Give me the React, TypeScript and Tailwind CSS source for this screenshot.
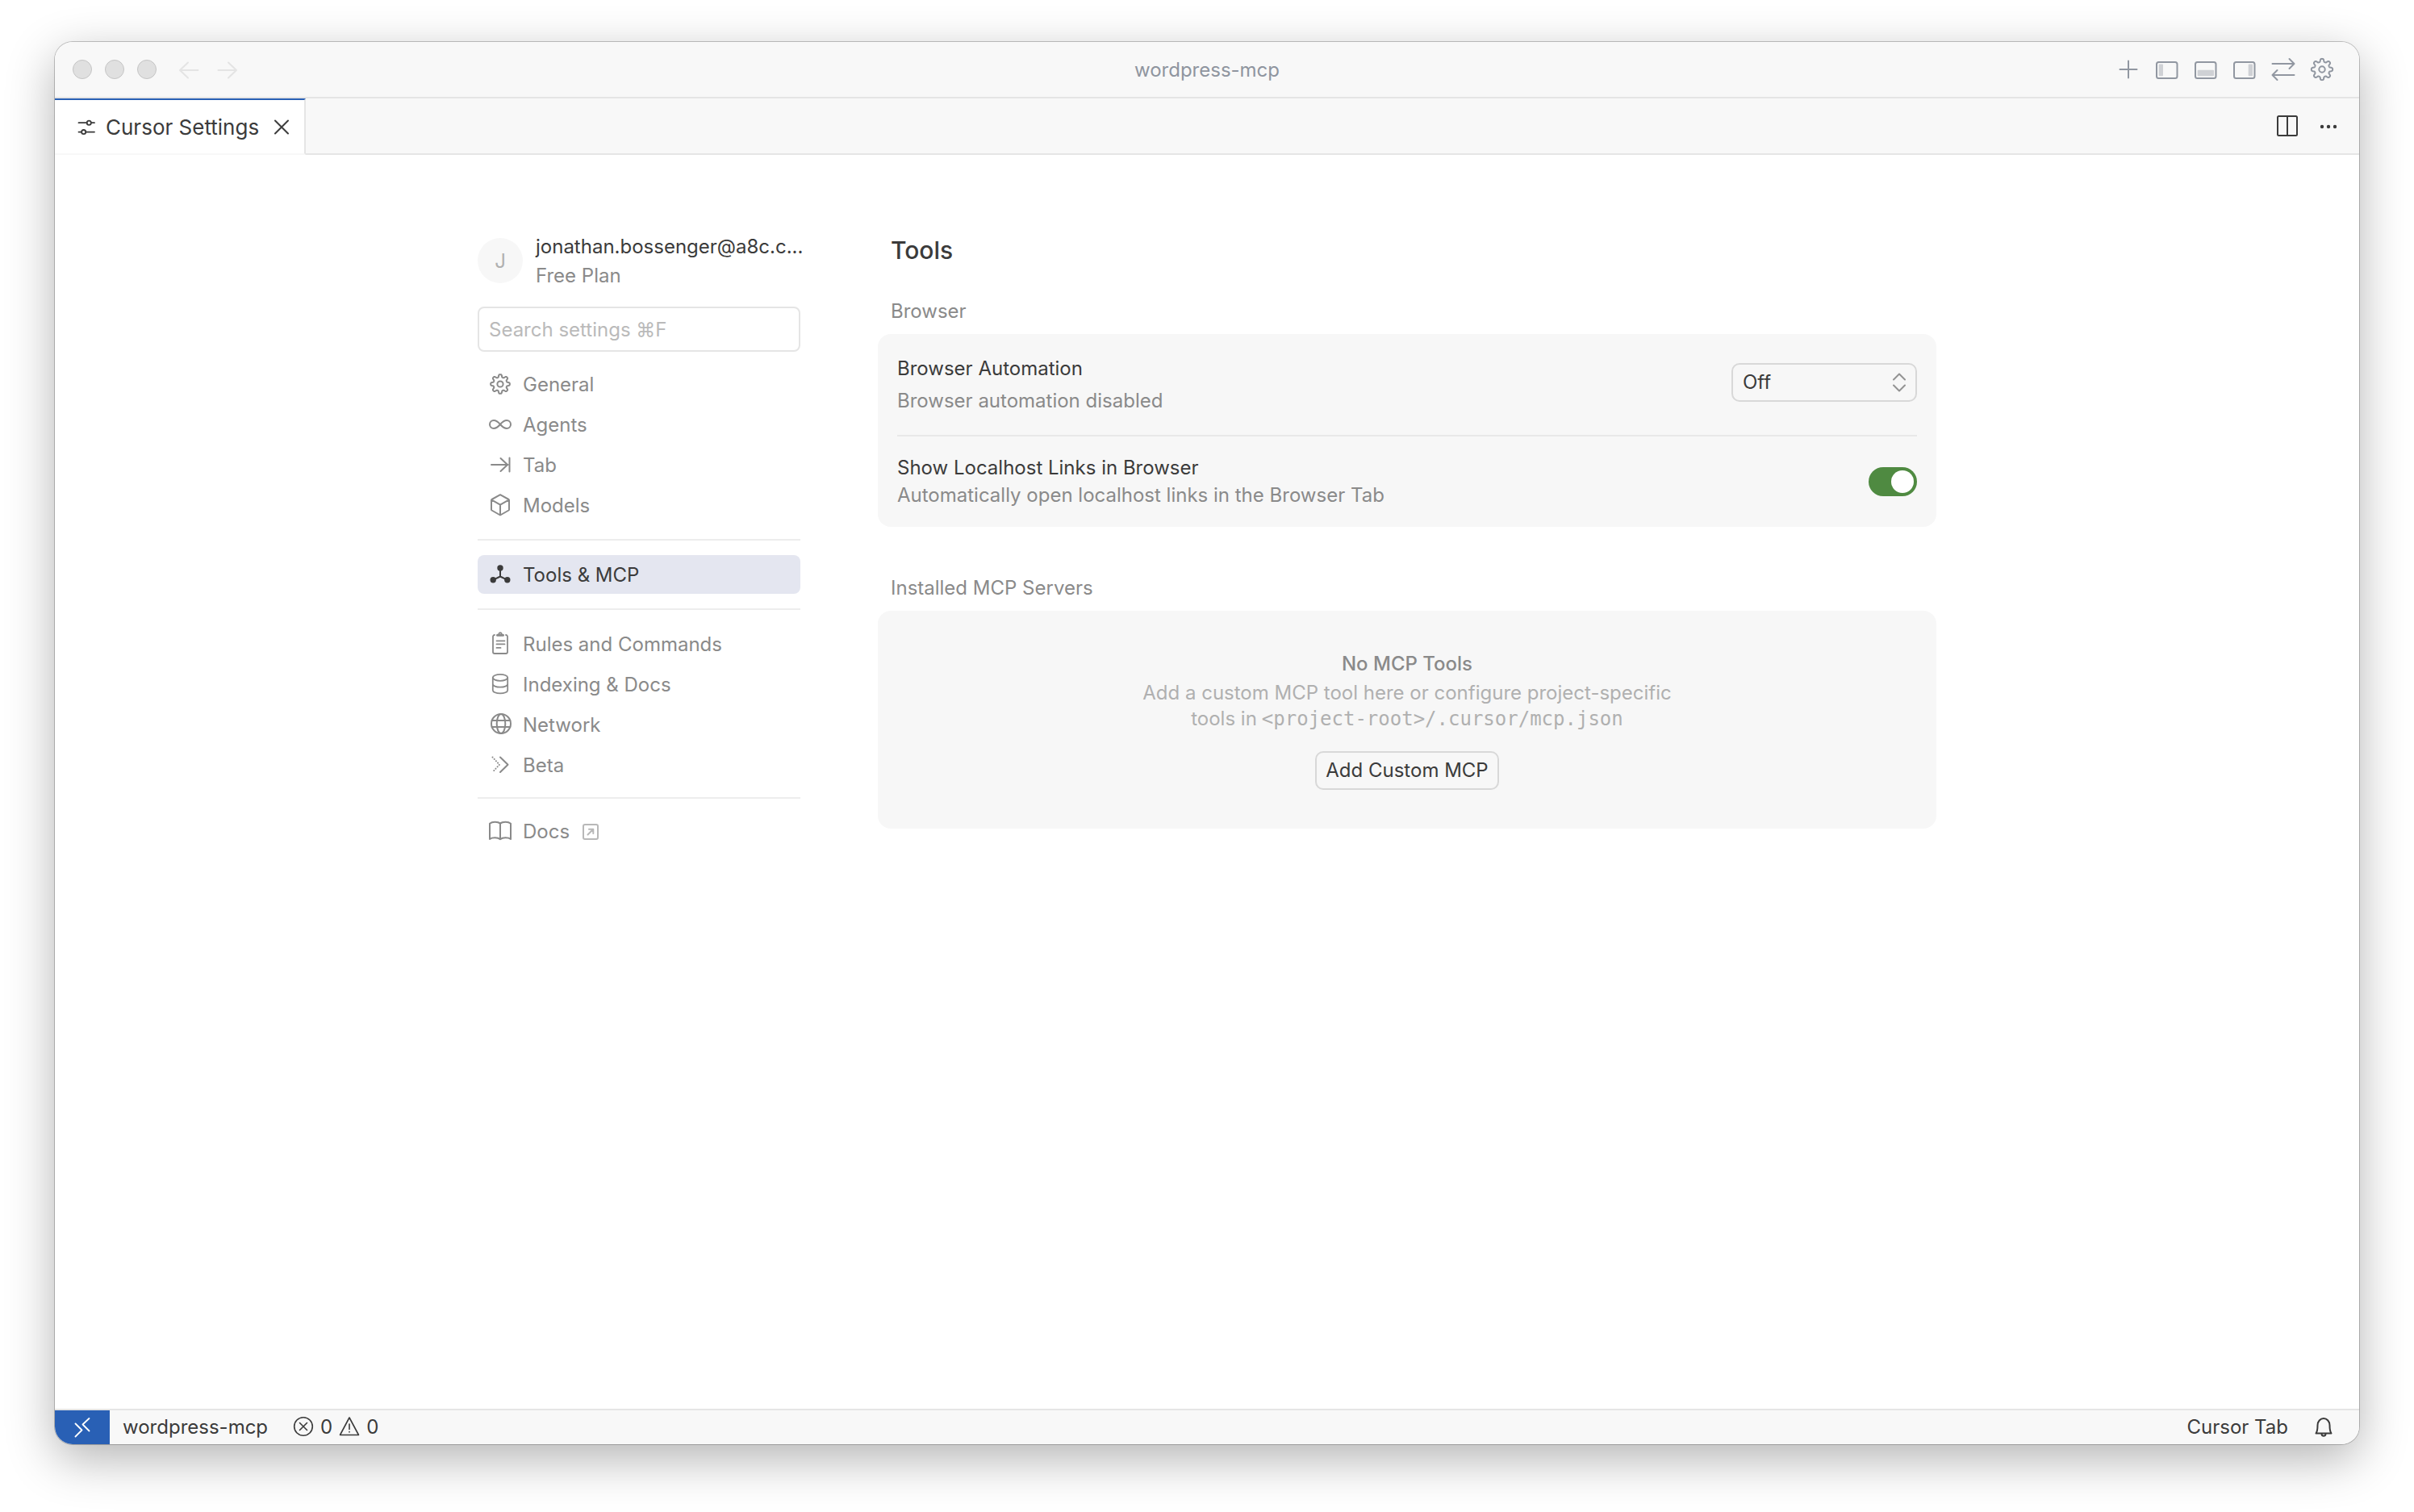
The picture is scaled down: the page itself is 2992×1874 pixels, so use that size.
import { useState } from "react";
import type { ReactNode } from "react";
import clsx from "clsx";

interface IconProps {
  children: ReactNode;
  className?: string;
  width?: number;
}

// shared wrapper, every icon is drawn on a 32 grid
const Icon = ({ children, className, width = 2 }: IconProps) => (
  <svg
    viewBox="0 0 32 32"
    fill="none"
    stroke="currentColor"
    strokeWidth={width}
    strokeLinecap="round"
    strokeLinejoin="round"
    aria-hidden="true"
    className={clsx("size-8 shrink-0", className)}
  >
    {children}
  </svg>
);

// eight rounded teeth around a circle
const gearPath = (radius: number, tooth: number) => {
  const points: string[] = [];
  for (let i = 0; i < 160; i++) {
    const t = (i / 160) * Math.PI * 2;
    const r = radius + tooth * Math.tanh(2 * Math.cos(8 * t));
    points.push(`${(16 + r * Math.sin(t)).toFixed(2)} ${(16 - r * Math.cos(t)).toFixed(2)}`);
  }
  return "M" + points.join("L") + "Z";
};

const GearLarge = () => (
  <Icon>
    <path d={gearPath(11.3, 1.9)} />
    <circle cx="16" cy="16" r="3.7" />
  </Icon>
);

const GearIcon = () => (
  <Icon>
    <path d={gearPath(10.2, 1.7)} />
    <circle cx="16" cy="16" r="3.6" />
  </Icon>
);

const AgentsIcon = () => (
  <Icon>
    <path d="M16 16c-3-3.5-5-5-8-5a5 5 0 0 0 0 10c3 0 5-1.5 8-5s5-5 8-5a5 5 0 0 1 0 10c-3 0-5-1.5-8-5" />
  </Icon>
);

const TabIcon = () => (
  <Icon>
    <path d="M5 16h20.5M16.5 8l8.500 8-8.500 8M27.500 7.500v17" />
  </Icon>
);

const ModelsIcon = () => (
  <Icon>
    <path d="M16 3.2 26.5 9a1.2 1.2 0 0 1 .5 1v11.5a1.2 1.2 0 0 1-.5 1L16 28.5 5.5 22.5a1.2 1.2 0 0 1-.5-1V10a1.2 1.2 0 0 1 .5-1zM5.5 9.700 16 15.700l10.500-6M16 15.700v12" />
  </Icon>
);

const ToolsIcon = () => (
  <Icon>
    <path d="M16 9v9.5M16 18.5 7.500 22.700M16 18.500l8.500 4.200" />
    <g fill="currentColor" stroke="none">
      <circle cx="16" cy="8" r="3.7" />
      <circle cx="7.2" cy="22.7" r="3.7" />
      <circle cx="24.8" cy="22.7" r="3.7" />
    </g>
  </Icon>
);

const RulesIcon = () => (
  <Icon width={1.8}>
    <path d="M9 5a2 2 0 0 0-2 2v19a2 2 0 0 0 2 2h14a2 2 0 0 0 2-2V7a2 2 0 0 0-2-2" />
    <path d="M11.5 12.3h10M11.5 16.4h10M11.5 20.9h5" />
    <path d="M12.5 5.3h7" strokeWidth="3" />
    <circle cx="16" cy="3.8" r="1.6" />
  </Icon>
);

const IndexingIcon = () => (
  <Icon width={1.8}>
    <ellipse cx="16" cy="7.8" rx="9.2" ry="4" />
    <path d="M6.8 7.8V23.5c0 2.2 4 3.9 9.2 3.9s9.2-1.7 9.2-3.900V7.800M6.800 15.800c0 2.200 4 3.900 9.200 3.900s9.200-1.700 9.200-3.900" />
  </Icon>
);

const NetworkIcon = () => (
  <Icon>
    <circle cx="17" cy="15" r="12" />
    <ellipse cx="17" cy="15" rx="5.3" ry="12" />
    <path d="M5.7 11h22.6M5.7 19h22.6" />
  </Icon>
);

const BetaIcon = () => (
  <Icon>
    <path d="M16 6.5 25.5 15.7 16 25" />
    <path d="M6.5 6.5 15 15.7 6.5 25" strokeDasharray="0.1 3.1" />
  </Icon>
);

const BookIcon = () => (
  <Icon>
    <path d="M16 6.8C14.5 5.3 12 4.8 9.5 4.8S4.600 5.400 3 6.800V26c1.600-1.300 4-1.700 6.500-1.700s5 .6 6.500 2c1.500-1.400 4-2 6.500-2s4.900.4 6.500 1.700V6.800c-1.600-1.400-4-2-6.500-2S17.500 5.300 16 6.800zM16 6.800v19.500" />
  </Icon>
);

const ExternalIcon = () => (
  <Icon className="text-[#b8b8b8]">
    <rect x="7" y="7" width="18" height="18" rx="2" />
    <path d="M12.5 19.5 19 13M14 12.7h5.3V18" />
  </Icon>
);

interface PanelIconProps {
  side: "left" | "bottom" | "right";
}

const PanelIcon = ({ side }: PanelIconProps) => (
  <Icon>
    <rect x="3" y="7" width="25.5" height="20" rx="2.5" />
    <g fill="currentColor" stroke="none" opacity="0.4">
      {side === "left" && <rect x="5.7" y="9.5" width="5.3" height="14.7" rx="1" />}
      {side === "bottom" && <rect x="5.7" y="16.8" width="20.3" height="7.4" rx="1" />}
      {side === "right" && <rect x="20.7" y="9.5" width="5.3" height="14.7" rx="1" />}
    </g>
  </Icon>
);

const TitleBar = () => (
  <header className="grid h-[70px] grid-cols-[1fr_auto_1fr] items-center border-b-2 border-[#e5e5e5] bg-[#f8f8f8] px-[22px]">
    <div className="flex items-center gap-6">
      <div className="flex gap-4">
        <button aria-label="Close" className="size-6 rounded-full border border-[#c4c4c4] bg-[#e0e0e0]" />
        <button aria-label="Minimize" className="size-6 rounded-full border border-[#c4c4c4] bg-[#e0e0e0]" />
        <button aria-label="Zoom" className="size-6 rounded-full border border-[#c4c4c4] bg-[#e0e0e0]" />
      </div>
      <div className="flex gap-4 text-[#e4e4e4]">
        <button aria-label="Back">
          <Icon>
            <path d="M15 7.5 5 17l10 9.5M5 17h22.5" />
          </Icon>
        </button>
        <button aria-label="Forward">
          <Icon>
            <path d="M17 7.5 27 17l-10 9.5M27 17H4.5" />
          </Icon>
        </button>
      </div>
    </div>
    <h1 className="pt-0.5 leading-8 text-[#8f959f]">wordpress-mcp</h1>
    <div className="flex justify-end gap-4 pr-2 text-[#9197a1]">
      <button aria-label="New chat">
        <Icon>
          <path d="M16 5.5v21M5.5 16h21" />
        </Icon>
      </button>
      <button aria-label="Toggle side bar">
        <PanelIcon side="left" />
      </button>
      <button aria-label="Toggle panel">
        <PanelIcon side="bottom" />
      </button>
      <button aria-label="Toggle chat">
        <PanelIcon side="right" />
      </button>
      <button aria-label="Switch layout">
        <Icon>
          <path d="M2.5 9h27M23.5 3l6 6-6 6M29.5 23h-27M8.5 17l-6 6 6 6" />
        </Icon>
      </button>
      <button aria-label="Settings">
        <GearLarge />
      </button>
    </div>
  </header>
);

const TabBar = () => (
  <div className="flex h-[70px] bg-[#f8f8f8] text-[#3b3b3b]">
    <div className="flex items-center border-t-2 border-r-2 border-b-2 border-t-[#2960b5] border-r-[#e5e5e5] border-b-[#f8f8f8] bg-white pr-3 pl-[23px]">
      <Icon width={1.8}>
        <path d="M6.5 11.2h10M22 11.2h4M6.5 22.6h3.5M15.5 22.6h10.5" />
        <circle cx="19.3" cy="11.2" r="2.6" />
        <circle cx="12.7" cy="22.6" r="2.6" />
      </Icon>
      <span className="mt-0.5 ml-2 text-[26px] leading-8">Cursor Settings</span>
      <button aria-label="Close tab" className="ml-3">
        <Icon>
          <path d="m8 8.5 16 16M24 8.5l-16 16" />
        </Icon>
      </button>
    </div>
    <div className="flex flex-1 items-center justify-end gap-5 border-b-2 border-[#e5e5e5] pr-[22px]">
      <button aria-label="Split editor">
        <Icon>
          <rect x="5" y="4" width="24" height="24" rx="1.5" />
          <path d="M17 4v24" />
        </Icon>
      </button>
      <button aria-label="More actions">
        <Icon>
          <g fill="currentColor" stroke="none">
            <circle cx="8" cy="17" r="2.2" />
            <circle cx="16" cy="17" r="2.2" />
            <circle cx="24" cy="17" r="2.2" />
          </g>
        </Icon>
      </button>
    </div>
  </div>
);

interface NavItemProps {
  label: string;
  icon: ReactNode;
  active?: boolean;
  external?: boolean;
}

const NavItem = ({ label, icon, active, external }: NavItemProps) => (
  <a
    href="#"
    className={clsx(
      "flex h-12 items-center gap-3 rounded-lg px-3",
      active ? "bg-[#e4e6f0] text-[#3b3b3b]" : "text-[#8a8a8a]"
    )}
  >
    {icon}
    <span className="flex items-center gap-2.5 pt-0.5">
      {label}
      {external && <ExternalIcon />}
    </span>
  </a>
);

const Sidebar = () => (
  <aside className="w-[400px] shrink-0">
    <div className="flex items-center gap-4">
      <div className="flex size-14 shrink-0 items-center justify-center rounded-full bg-[#f7f7f7] pt-0.5 text-[#b0b0b0]">
        J
      </div>
      <div className="pt-0.5 leading-9 whitespace-nowrap">
        <p className="text-[#3b3b3b]">jonathan.bossenger@a8c.c...</p>
        <p className="text-[#8a8a8a]">Free Plan</p>
      </div>
    </div>
    <input
      type="text"
      aria-label="Search settings"
      placeholder="Search settings ⌘F"
      className="mt-5 h-14 w-full rounded-lg border-2 border-[#e5e5e5] bg-white px-3 text-[#3b3b3b] outline-none placeholder:text-[#bababa]"
    />
    <nav className="mt-4">
      <div className="flex flex-col gap-0.5">
        <NavItem label="General" icon={<GearIcon />} />
        <NavItem label="Agents" icon={<AgentsIcon />} />
        <NavItem label="Tab" icon={<TabIcon />} />
        <NavItem label="Models" icon={<ModelsIcon />} />
      </div>
      <hr className="my-[18px] border-t-2 border-[#ededed]" />
      <NavItem label="Tools & MCP" icon={<ToolsIcon />} active />
      <hr className="my-[18px] border-t-2 border-[#ededed]" />
      <div className="flex flex-col gap-0.5">
        <NavItem label="Rules and Commands" icon={<RulesIcon />} />
        <NavItem label="Indexing & Docs" icon={<IndexingIcon />} />
        <NavItem label="Network" icon={<NetworkIcon />} />
        <NavItem label="Beta" icon={<BetaIcon />} />
      </div>
      <hr className="my-4 border-t-2 border-[#ededed]" />
      <NavItem label="Docs" icon={<BookIcon />} external />
    </nav>
  </aside>
);

const ToolsPage = () => {
  const [automation, setAutomation] = useState("Off");
  const [localhost, setLocalhost] = useState(true);

  return (
    <main className="min-w-0 flex-1 pt-1 leading-8">
      <h2 className="pl-4 text-[30px] leading-10 font-medium text-[#3b3b3b]">Tools</h2>

      <h3 className="mt-10 pl-4 text-[#8a8a8a]">Browser</h3>
      <section className="mt-3 rounded-2xl bg-[#f7f7f7] px-6">
        <div className="flex items-start justify-between border-b-2 border-[#e8e8e8] pt-[26px] pb-[25px]">
          <div className="flex flex-col gap-1.5 leading-[34px]">
            <label htmlFor="automation" className="text-[#3b3b3b]">
              Browser Automation
            </label>
            <p className="text-[#8a8a8a]">Browser automation disabled</p>
          </div>
          <div className="relative mt-2.5">
            <select
              id="automation"
              value={automation}
              onChange={(e) => setAutomation(e.target.value)}
              className="block h-12 w-[230px] appearance-none rounded-[10px] border-2 border-[#d8d8d8] bg-transparent px-3 text-[#3b3b3b]"
            >
              <option>Off</option>
              <option>Browser Tab</option>
              <option>Google Chrome</option>
            </select>
            <Icon className="pointer-events-none absolute top-2 right-1.5 text-[#929292]">
              <path d="M9 12.5 16 5.500l7 7M9 19.500l7 7 7-7" />
            </Icon>
          </div>
        </div>
        <div className="flex items-center justify-between py-[22px]">
          <div className="leading-[34px]">
            <label htmlFor="localhost" className="text-[#3b3b3b]">
              Show Localhost Links in Browser
            </label>
            <p className="text-[#8a8a8a]">Automatically open localhost links in the Browser Tab</p>
          </div>
          <input
            id="localhost"
            type="checkbox"
            role="switch"
            checked={localhost}
            onChange={(e) => setLocalhost(e.target.checked)}
            className="flex h-9 w-[60px] appearance-none items-center rounded-full bg-[#c8c8c8] p-1 before:block before:size-7 before:rounded-full before:bg-white before:content-[''] checked:justify-end checked:bg-[#4f8a41]"
          />
        </div>
      </section>

      <h3 className="mt-[60px] pl-4 text-[#8a8a8a]">Installed MCP Servers</h3>
      <section className="mt-3 flex flex-col items-center rounded-2xl bg-[#f7f7f7] pt-[50px] pb-12 text-center">
        <h4 className="font-medium text-[#8a8a8a]">No MCP Tools</h4>
        <p className="mt-1 text-[#b0b0b0]">
          <span className="block">Add a custom MCP tool here or configure project-specific</span>
          <span className="flex justify-center gap-1.5">
            <span>tools in</span>
            <code className="font-['DejaVu_Sans_Mono',monospace]">&lt;project-root&gt;/.cursor/mcp.json</code>
          </span>
        </p>
        <button className="mt-6 h-12 w-[228px] rounded-[10px] border-2 border-[#d8d8d8] text-[#3b3b3b]">
          Add Custom MCP
        </button>
      </section>
    </main>
  );
};

const StatusBar = () => (
  <footer className="flex h-11 items-stretch border-t-2 border-[#e5e5e5] bg-[#f8f8f8] text-[#3b3b3b]">
    <button aria-label="Open remote window" className="flex w-[68px] items-center justify-center bg-[#2960b5] text-white">
      <Icon width={1.8}>
        <path d="m7.5 11.5 8 8-8 8M24.5 5l-8 7.5 8 8" />
      </Icon>
    </button>
    <button className="ml-4">wordpress-mcp</button>
    <button aria-label="Problems" className="ml-7 flex items-center gap-[5px]">
      <Icon width={1.6}>
        <circle cx="16" cy="15" r="11.3" />
        <path d="m11.5 10.5 9 9M20.5 10.5l-9 9" />
      </Icon>
      <span>0</span>
      <Icon width={1.6}>
        <path d="M16 4 27.5 25.500H4.500zM16 12v6.500M16 21.500v.5" />
      </Icon>
      <span>0</span>
    </button>
    <div className="ml-auto flex items-center gap-7 pr-7">
      <button>Cursor Tab</button>
      <button aria-label="Notifications">
        <Icon>
          <path d="M6.5 23.5c1.6-2 2-4.5 2-10a7.5 8.5 0 0 1 15 0c0 5.500.4 8 2 10z" />
          <path d="M13.5 24a2.5 2.8 0 0 0 5 0" />
        </Icon>
      </button>
    </div>
  </footer>
);

export default function App() {
  return (
    <div className="flex min-h-screen bg-white px-[68px] pt-[52px] pb-[84px] font-['Inter','Liberation_Sans',sans-serif] text-[24px]">
      <div className="flex flex-1 flex-col overflow-hidden rounded-[22px] bg-white shadow-[0_0_0_1px_rgba(0,0,0,0.22),0_18px_60px_rgba(0,0,0,0.3)]">
        <TitleBar />
        <TabBar />
        <div className="flex-1 px-8 pt-[94px] pb-10">
          <div className="mx-auto flex max-w-[1808px] items-start gap-24">
            <Sidebar />
            <ToolsPage />
          </div>
        </div>
        <StatusBar />
      </div>
    </div>
  );
}
